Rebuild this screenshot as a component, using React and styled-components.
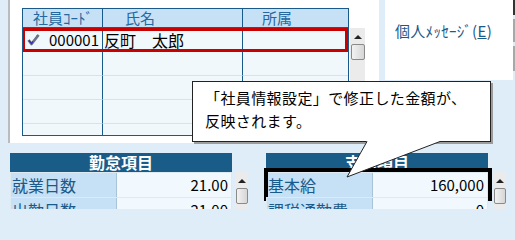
import React from 'react'
import styled, { createGlobalStyle } from 'styled-components'

const Global = createGlobalStyle`
  html, body {
    margin: 0;
    padding: 0;
    background: #deedf7;
    overflow: hidden;
  }
`

const Page = styled.div`
  position: relative;
  width: 515px;
  height: 209px;
  overflow: hidden;
  background: #deedf7;
  font-family: "Noto Sans CJK JP", "Noto Sans", sans-serif;
`

const Top = styled.div`
  display: flex;
  align-items: flex-start;
  height: 143px;
`

const ListPanel = styled.div`
  box-sizing: border-box;
  margin-left: 8px;
  width: 371px;
  height: 143px;
  border-left: 2px solid #b9bdc1;
  background: #fff;
  padding: 8px 0 0 12px;
  display: flex;
  align-items: flex-start;
`

const Grid = styled.div`
  box-sizing: border-box;
  width: 327px;
  height: 128px;
  border: 1px solid #1a5a8a;
  background: #f0f8fc;
  overflow: hidden;
  font-size: 15px;
`

const HeadRow = styled.div`
  display: flex;
  height: 18px;
  border-bottom: 1px solid #1a5a8a;
  background: #c6e1f5;
`

const HeadCell = styled.div`
  box-sizing: border-box;
  width: ${p => p.$w}px;
  padding-left: ${p => p.$pad}px;
  border-right: ${p => (p.$last ? 'none' : '1px solid #1a5a8a')};
  color: #2568a0;
  line-height: 18px;
  white-space: nowrap;
`

const BodyRow = styled.div`
  position: relative;
  display: flex;
  height: 24px;
`

const Cell = styled.div`
  box-sizing: border-box;
  width: ${p => p.$w}px;
  display: flex;
  align-items: center;
  justify-content: ${p => (p.$right ? 'space-between' : 'flex-start')};
  padding: 0 ${p => (p.$right ? 3 : 0)}px 0 ${p => (p.$right ? 4 : 1)}px;
  border-right: ${p => (p.$last ? 'none' : '1px solid #1a5a8a')};
  border-bottom: 1px solid #d2e6e8;
  color: #000;
  font-size: ${p => (p.$big ? 16 : 15)}px;
  white-space: nowrap;
`

const Selection = styled.div`
  position: absolute;
  top: 0;
  bottom: 0;
  left: -1px;
  right: 0;
  border: 3px solid #c80000;
  pointer-events: none;
`

const Scroll = styled.div`
  box-sizing: border-box;
  width: ${p => p.$w}px;
  height: ${p => p.$h}px;
  margin-top: ${p => p.$top}px;
  margin-left: ${p => p.$left}px;
  background: #ebebeb;
  display: flex;
  flex-direction: column;
  align-items: center;
  padding-top: 7px;
`

const Arrow = styled.div`
  width: 0;
  height: 0;
  border-left: 4px solid transparent;
  border-right: 4px solid transparent;
  border-bottom: 4px solid #222;
`

const Thumb = styled.div`
  box-sizing: border-box;
  margin-top: 5px;
  width: calc(100% - 1px);
  height: 16px;
  border: 1px solid #8a8a8a;
  border-radius: 2px;
  background: linear-gradient(to right, #f2f2f2, #d6d6d6);
`

const MessagePanel = styled.div`
  box-sizing: border-box;
  margin-left: 6px;
  width: 128px;
  height: 80px;
  background: #fff;
  padding: 20px 0 0 10px;
  color: #1a5a8a;
  font-size: 15px;
  letter-spacing: 0.3px;
  white-space: nowrap;
`

const Key = styled.span`
  text-decoration: underline;
`

const Edge = styled.div`
  display: flex;
  flex-direction: column;
  gap: 4px;
  width: 2px;
`

const EdgePart = styled.div`
  height: ${p => p.$h}px;
  background: ${p => p.$c};
`

const Bottom = styled.div`
  display: flex;
  align-items: flex-start;
  padding: 10px 0 0 10px;
`

const Block = styled.div`
  display: flex;
  align-items: flex-start;
  margin-left: ${p => p.$left}px;
`

const Table = styled.div`
  width: 222px;
`

const TableHead = styled.div`
  height: 19px;
  background: #1a5c88;
  color: #fff;
  font-weight: bold;
  font-size: 16px;
  line-height: 19px;
  text-align: center;
`

const TableRow = styled.div`
  position: relative;
  display: flex;
  height: 25px;
  box-sizing: border-box;
  padding: 1px 1px 0 1px;
  background: #dfe9f0;
`

const Label = styled.div`
  width: 104px;
  background: #c6e1f5;
  color: #1a5a8a;
  font-size: 16px;
  line-height: 24px;
  padding-left: 1px;
  border-right: 1px solid #a9c4d8;
  white-space: nowrap;
`

const Value = styled.div`
  flex: 1;
  background: #f1f9fe;
  color: #000;
  font-size: 15px;
  line-height: 24px;
  text-align: right;
  padding-right: 3px;
`

const Highlight = styled.div`
  position: absolute;
  top: -4px;
  left: -2px;
  right: -4px;
  bottom: -4px;
  border: 4px solid #000;
  pointer-events: none;
`

const Callout = styled.div`
  position: absolute;
  left: 192px;
  top: 81px;
  box-sizing: border-box;
  width: 299px;
  height: 61px;
  border: 1px solid #222;
  background: #fff;
  box-shadow: 2px 2px 0 #9c9c9c;
  padding: 4px 0 0 12px;
  font-size: 15px;
  letter-spacing: 0.4px;
  line-height: 23px;
  color: #000;
  white-space: nowrap;
`

const Pointer = styled.svg`
  position: absolute;
  left: 340px;
  top: 139px;
`

const Check = () => (
  <svg width="13" height="13" viewBox="0 0 13 13">
    <path d="M1.5 7 L4.5 11 L11.5 2" fill="none" stroke="#707088" strokeWidth="2.8" strokeLinejoin="round" />
    <path d="M2 7.5 L4.5 10.5 L6 8.5" fill="none" stroke="#3434b0" strokeWidth="1.3" />
    <path d="M9.5 3 L11.5 2" fill="none" stroke="#2f9a3a" strokeWidth="1.2" />
  </svg>
)

const ScrollBar = ({ w, h, top = 0, left = 0 }) => (
  <Scroll $w={w} $h={h} $top={top} $left={left}>
    <Arrow />
    <Thumb />
  </Scroll>
)

const cols = [
  { w: 80, pad: 10, label: '社員ｺｰﾄﾞ' },
  { w: 140, pad: 22, label: '氏名' },
  { w: 105, pad: 19, label: '所属', last: true },
]

const DataTable = ({ title, rows, marked }) => (
  <Table>
    <TableHead>{title}</TableHead>
    {rows.map((r, i) => (
      <TableRow key={r.label}>
        <Label>{r.label}</Label>
        <Value>{r.value}</Value>
        {marked && i === 0 && <Highlight />}
      </TableRow>
    ))}
  </Table>
)

export default function App() {
  return (
    <Page>
      <Global />
      <Top>
        <ListPanel>
          <Grid>
            <HeadRow>
              {cols.map(c => (
                <HeadCell key={c.label} $w={c.w} $pad={c.pad} $last={c.last}>{c.label}</HeadCell>
              ))}
            </HeadRow>
            <BodyRow>
              <Cell $w={80} $right><Check />000001</Cell>
              <Cell $w={140} $big>反町　太郎</Cell>
              <Cell $w={105} $last />
              <Selection />
            </BodyRow>
            {[1, 2, 3, 4].map(n => (
              <BodyRow key={n}>
                <Cell $w={80} />
                <Cell $w={140} />
                <Cell $w={105} $last />
              </BodyRow>
            ))}
          </Grid>
          <ScrollBar w={15} h={108} top={20} left={1} />
        </ListPanel>
        <MessagePanel>
          個人ﾒｯｾｰｼﾞ(<Key>E</Key>)
        </MessagePanel>
        <Edge>
          <EdgePart $h={15} $c="#333" />
          <EdgePart $h={23} $c="#a8a8a8" />
          <EdgePart $h={25} $c="#a8a8a8" />
        </Edge>
      </Top>
      <Bottom>
        <Block $left={0}>
          <DataTable
            title="勤怠項目"
            rows={[
              { label: '就業日数', value: '21.00' },
              { label: '出勤日数', value: '21.00' },
            ]}
          />
          <ScrollBar w={13} h={40} top={19} left={3} />
        </Block>
        <Block $left={18}>
          <DataTable
            title="支給項目"
            marked
            rows={[
              { label: '基本給', value: '160,000' },
              { label: '課税通勤費', value: '0' },
            ]}
          />
          <ScrollBar w={13} h={40} top={19} left={5} />
        </Block>
      </Bottom>
      <Callout>
        「社員情報設定」で修正した金額が、
        <br />
        反映されます。
      </Callout>
      <Pointer width="105" height="42" viewBox="0 0 105 42">
        <polygon points="27,0 100,0 100,2.5 7,38 27,2" fill="#fff" />
        <polyline points="27,2.5 7,38 100,2.5" fill="none" stroke="#222" strokeWidth="1" />
      </Pointer>
    </Page>
  )
}
